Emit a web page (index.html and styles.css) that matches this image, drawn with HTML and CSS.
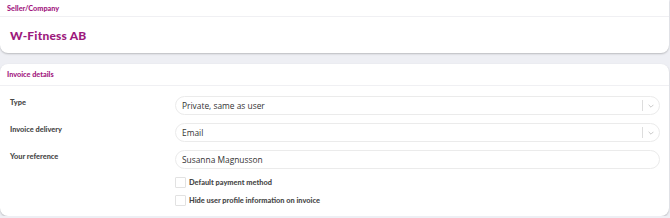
FILE: index.html
```html
<!DOCTYPE html>
<html lang="en">
<head>
    <meta charset="UTF-8">
    <meta name="viewport" content="width=device-width, initial-scale=1.0">
    <title>Invoice</title>
    <link rel="stylesheet" href="styles.css">
</head>
<body>
    <!-- Seller -->
    <div class="card card-top">
        <div class="card-header">Seller/Company</div>
        <div class="card-body">
            <h2 class="company">W-Fitness AB</h2>
        </div>
    </div>

    <!-- Invoice details -->
    <div class="card card-details">
        <div class="card-header">Invoice details</div>
        <div class="form">
            <label class="label">Type</label>
            <div class="field select">
                <span>Private, same as user</span>
                <span class="sep"></span>
                <svg class="chev" viewBox="0 0 10 6" width="6" height="4"><path d="M1 1l4 4 4-4" fill="none" stroke="#b5b5b5" stroke-width="1.2"/></svg>
            </div>

            <label class="label">Invoice delivery</label>
            <div class="field select">
                <span>Email</span>
                <span class="sep"></span>
                <svg class="chev" viewBox="0 0 10 6" width="6" height="4"><path d="M1 1l4 4 4-4" fill="none" stroke="#b5b5b5" stroke-width="1.2"/></svg>
            </div>

            <label class="label">Your reference</label>
            <div class="field">
                <span>Susanna Magnusson</span>
            </div>

            <div></div>
            <div class="checks">
                <label class="check"><span class="box"></span>Default payment method</label>
                <label class="check"><span class="box"></span>Hide user profile information on invoice</label>
            </div>
        </div>
    </div>
</body>
</html>
```

FILE: styles.css
```css
* {
    margin: 0;
    padding: 0;
    box-sizing: border-box;
}
body {
    font-family: "Lato", "Open Sans", sans-serif;
    background-color: #eeeff4;
    color: #333;
}

/* Cards */
.card {
    width: 669px;
    background-color: #fff;
    box-shadow: 0 1px 2px rgba(0, 0, 0, 0.22);
}
.card-top {
    border-radius: 0 0 8px 8px;
    height: 53px;
}
.card-details {
    margin-top: 11px;
    border-radius: 8px;
    height: 152px;
}
.card-header {
    height: 22px;
    padding: 0 7px;
    display: flex;
    align-items: center;
    font-size: 7.3px;
    font-weight: 900;
    color: #a3197f;
    border-bottom: 1px solid #f0f0f3;
}
.card-top .card-header {
    height: 17px;
    align-items: flex-start;
    padding-top: 4px;
}
.card-body {
    padding: 13px 10px;
}
.company {
    font-size: 12px;
    font-weight: 900;
    color: #9d1a7d;
    line-height: 12px;
    letter-spacing: 0.2px;
}

/* Form */
.form {
    display: grid;
    grid-template-columns: 175px 485px;
    row-gap: 8px;
    padding-top: 10px;
}
.label {
    font-size: 7.4px;
    font-weight: 900;
    color: #484848;
    padding-left: 10px;
    padding-top: 2px;
}
.field {
    height: 19px;
    border: 1px solid #ebebeb;
    border-radius: 10px;
    display: flex;
    align-items: center;
    padding: 0 5px 0 6px;
    font-family: "Open Sans", sans-serif;
    font-size: 8.4px;
    color: #333;
}
.field span:first-child {
    flex: 1;
}
.sep {
    width: 1px;
    height: 11px;
    background-color: #ddd;
    margin-right: 5px;
}
.chev {
    display: block;
}

/* Checkboxes */
.checks {
    display: flex;
    flex-direction: column;
    gap: 7px;
    margin-top: 0;
}
.check {
    display: flex;
    align-items: center;
    gap: 3px;
    font-size: 7.4px;
    font-weight: 900;
    color: #484848;
}
.box {
    width: 11px;
    height: 11px;
    border: 1px solid #e2e2e2;
    border-radius: 1px;
}
```
